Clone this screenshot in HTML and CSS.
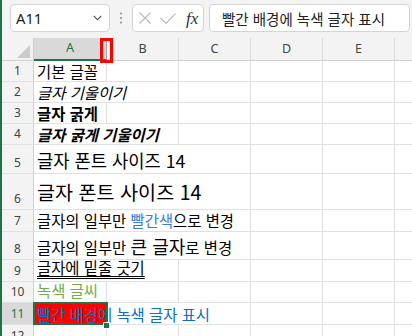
FILE: index.html
```html
<!DOCTYPE html>
<html lang="ko">
<head>
<meta charset="utf-8">
<title>Excel</title>
<link rel="stylesheet" href="styles.css">
</head>
<body>
<div class="app">
  <div class="topbar">
    <div class="namebox">
      <span class="nb-text">A11</span>
      <svg class="chev" width="9" height="6" viewBox="0 0 9 6"><path d="M0.7 0.8 L4.5 4.8 L8.3 0.8" fill="none" stroke="#444" stroke-width="1.1"/></svg>
    </div>
    <div class="grip">
      <svg width="4" height="12" viewBox="0 0 4 12"><circle cx="2" cy="1.5" r="1" fill="#8a8a8a"/><circle cx="2" cy="6" r="1" fill="#8a8a8a"/><circle cx="2" cy="10.5" r="1" fill="#8a8a8a"/></svg>
    </div>
    <div class="fbtns">
      <svg class="ic-x" width="12" height="12" viewBox="0 0 12 12"><path d="M0.5 0.5 L11.5 11.5 M11.5 0.5 L0.5 11.5" stroke="#b8b8b8" stroke-width="1.1" fill="none"/></svg>
      <svg class="ic-ok" width="16" height="11" viewBox="0 0 16 11"><path d="M0.5 5 L6 10.4 L15.5 0.6" stroke="#b8b8b8" stroke-width="1.1" fill="none"/></svg>
      <span class="fx">fx</span>
    </div>
    <div class="fbar">빨간 배경에 녹색 글자 표시</div>
  </div>

  <div class="sheet">
    <div class="corner"><svg width="13" height="13" viewBox="0 0 13 13"><polygon points="13,0 13,13 0,13" fill="#cccccc"/></svg></div>
    <div class="ch sel">A</div><div class="ch">B</div><div class="ch">C</div><div class="ch">D</div><div class="ch">E</div><div class="ch"></div>

    <div class="rh">1</div>
    <div class="c"><span>기본 글꼴</span></div><div class="c"></div><div class="c"></div><div class="c"></div><div class="c"></div><div class="c"></div>

    <div class="rh">2</div>
    <div class="c s2"><span class="it">글자 기울이기</span></div><div class="c"></div><div class="c"></div><div class="c"></div><div class="c"></div>

    <div class="rh">3</div>
    <div class="c"><span class="bd">글자 굵게</span></div><div class="c"></div><div class="c"></div><div class="c"></div><div class="c"></div><div class="c"></div>

    <div class="rh">4</div>
    <div class="c s2"><span class="bd it">글자 굵게 기울이기</span></div><div class="c"></div><div class="c"></div><div class="c"></div><div class="c"></div>

    <div class="rh">5</div>
    <div class="c s3 r5"><span class="f14a">글자 폰트 사이즈 14</span></div><div class="c"></div><div class="c"></div><div class="c"></div>

    <div class="rh">6</div>
    <div class="c s3 r6"><span class="f14b">글자 폰트 사이즈 14</span></div><div class="c"></div><div class="c"></div><div class="c"></div>

    <div class="rh">7</div>
    <div class="c s3 r7"><span>글자의 일부만 <span class="blue">빨간색</span>으로 변경</span></div><div class="c"></div><div class="c"></div><div class="c"></div>

    <div class="rh">8</div>
    <div class="c s3 r8"><span>글자의 일부만 <span class="big">큰 글자</span>로 변경</span></div><div class="c"></div><div class="c"></div><div class="c"></div>

    <div class="rh">9</div>
    <div class="c s2 r9"><span class="dbl">글자에 밑줄 긋기</span></div><div class="c"></div><div class="c"></div><div class="c"></div><div class="c"></div>

    <div class="rh">10</div>
    <div class="c r10"><span class="green">녹색 글씨</span></div><div class="c"></div><div class="c"></div><div class="c"></div><div class="c"></div><div class="c"></div>

    <div class="rh sel">11</div>
    <div class="c s3 redfill"><span class="blue2">빨간 배경에 녹색 글자 표시</span></div><div class="c"></div><div class="c"></div><div class="c"></div>

    <div class="rh">12</div>
    <div class="c"></div><div class="c"></div><div class="c"></div><div class="c"></div><div class="c"></div><div class="c"></div>

    <div class="selection"><span class="handle"></span></div>
    <div class="marker"></div>
  </div>
</div>
</body>
</html>
```

FILE: styles.css
```css
html, body {
  margin: 0;
  padding: 0;
}
body {
  width: 412px;
  height: 336px;
  overflow: hidden;
  font-family: "Noto Sans CJK KR", "Noto Sans", sans-serif;
}
.app {
  height: 336px;
  border-left: 2px solid #217346;
  background: #f3f3f3;
  display: flex;
  flex-direction: column;
  overflow: hidden;
}
.topbar {
  height: 38px;
  flex: none;
  display: flex;
  align-items: flex-start;
  padding: 4px 0 0 8px;
  box-sizing: border-box;
}
.namebox {
  flex: none;
  width: 100px;
  height: 28px;
  box-sizing: border-box;
  background: #fff;
  border: 1px solid #d4d4d4;
  border-radius: 4px;
  display: flex;
  align-items: center;
  justify-content: space-between;
  padding: 0 7px 0 5px;
}
.nb-text {
  font-family: "Noto Sans", sans-serif;
  font-size: 14.7px;
  line-height: 1;
  color: #222;
}
.grip {
  flex: none;
  width: 22px;
  height: 28px;
  display: flex;
  align-items: center;
  justify-content: center;
}
.fbtns {
  flex: none;
  width: 72px;
  height: 28px;
  box-sizing: border-box;
  background: #fff;
  border: 1px solid #d4d4d4;
  border-radius: 4px;
  display: flex;
  align-items: center;
  padding-left: 6px;
}
.ic-ok {
  margin-left: 9px;
}
.fx {
  margin-left: 10px;
  font-family: "Liberation Serif", serif;
  font-style: italic;
  font-size: 17px;
  line-height: 1;
  color: #333;
}
.fbar {
  flex: none;
  margin-left: 5px;
  width: 201px;
  height: 28px;
  box-sizing: border-box;
  background: #fff;
  border: 1px solid #d4d4d4;
  border-radius: 4px;
  padding-left: 12px;
  display: flex;
  align-items: center;
  font-size: 14.5px;
  color: #222;
  white-space: nowrap;
  overflow: hidden;
}

.sheet {
  position: relative;
  flex: none;
  display: grid;
  grid-template-columns: 32px 73px repeat(5, 72px);
  grid-template-rows: 23px 21px 21px 21px 21px 29px 36px 22px 28px 22px 21px 22px 22px;
  background: #fff;
}
.corner {
  background: #f3f3f3;
  border-right: 1px solid #cfcfcf;
  border-bottom: 1px solid #cfcfcf;
  display: flex;
  align-items: flex-end;
  justify-content: flex-end;
  padding: 0 3px 2px 0;
}
.ch {
  background: #f3f3f3;
  border-right: 1px solid #dadada;
  border-bottom: 1px solid #cfcfcf;
  display: flex;
  align-items: center;
  justify-content: center;
  font-family: "Noto Sans", sans-serif;
  font-size: 12.5px;
  line-height: 1;
  color: #444;
}
.ch.sel {
  background: #d9d9d9;
  color: #217346;
  border-bottom: 2px solid #217346;
  border-right-color: #a6a6a6;
}
.rh {
  background: #f3f3f3;
  border-right: 1px solid #cfcfcf;
  border-bottom: 1px solid #e1e1e1;
  display: flex;
  align-items: flex-end;
  justify-content: center;
  padding-bottom: 4px;
  box-sizing: border-box;
  font-family: "Noto Sans", sans-serif;
  font-size: 12px;
  line-height: 1;
  color: #444;
}
.rh.sel {
  background: #d9d9d9;
  color: #217346;
}
.c {
  min-width: 0;
  border-right: 1px solid #e1e1e1;
  border-bottom: 1px solid #e1e1e1;
  display: flex;
  align-items: flex-end;
  padding: 0 0 2px 3px;
  box-sizing: border-box;
  white-space: nowrap;
  font-size: 15.4px;
  line-height: 1;
  color: #000;
}
.s2 { grid-column: span 2; }
.s3 { grid-column: span 3; }
.it { font-style: italic; }
.bd { font-weight: bold; }
.f14a { font-size: 17.7px; }
.r5 { padding-bottom: 3px; }
.f14b { font-size: 19.6px; }
.r6 { align-items: center; padding-bottom: 0; }
.r7 { padding-bottom: 3px; }
.big { font-size: 18px; }
.r8 { padding-bottom: 4px; }
.blue { color: #3a7bdc; }
.blue2 { color: #0a6fc6; }
.green { color: #70ad47; }
.r9 { padding-bottom: 6px; }
.r10 { padding-bottom: 4px; }
.dbl {
  text-decoration: underline double;
  text-decoration-thickness: 1px;
  text-underline-offset: 2px;
}
.redfill {
  background: linear-gradient(90deg, #ff0000 0, #ff0000 72px, transparent 72px);
}
.selection {
  position: absolute;
  grid-row: 12 / 13;
  grid-column: 2 / 3;
  top: -1px;
  left: -1px;
  right: -1px;
  bottom: 0;
  border: 2px solid #217346;
}
.handle {
  position: absolute;
  right: -4px;
  bottom: -6px;
  width: 5px;
  height: 5px;
  background: #217346;
  border: 1px solid #fff;
}
.marker {
  position: absolute;
  left: 98px;
  top: 0;
  width: 13px;
  height: 25px;
  box-sizing: border-box;
  border: 3px solid #ff0000;
}
```
